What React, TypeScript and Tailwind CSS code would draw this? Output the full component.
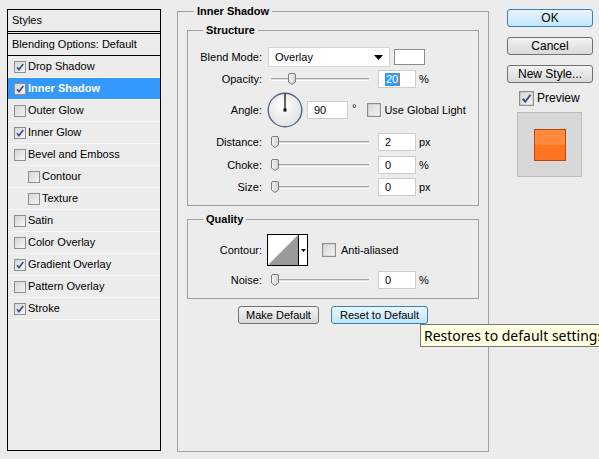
import type { ReactNode } from 'react';

function Check({ checked, size = 12, className = '' }: { checked?: boolean; size?: number; className?: string }) {
  return (
    <svg width={size} height={size} viewBox="0 0 12 12" className={`shrink-0 ${className}`}>
      <defs>
        <linearGradient id="cbg" x1="0" y1="0" x2="1" y2="1">
          <stop offset="0" stopColor="#d4d4d4" />
          <stop offset="1" stopColor="#f7f7f7" />
        </linearGradient>
      </defs>
      <rect x="0.5" y="0.5" width="11" height="11" fill="url(#cbg)" stroke="#8e8f8f" />
      {checked && <path d="M3 6.2 L5 8.6 L9.2 3" fill="none" stroke="#3e4f87" strokeWidth="1.6" />}
    </svg>
  );
}

const layers = [
  { name: 'Drop Shadow', checked: true },
  { name: 'Inner Shadow', checked: true, selected: true },
  { name: 'Outer Glow' },
  { name: 'Inner Glow', checked: true },
  { name: 'Bevel and Emboss' },
  { name: 'Contour', sub: true },
  { name: 'Texture', sub: true },
  { name: 'Satin' },
  { name: 'Color Overlay' },
  { name: 'Gradient Overlay', checked: true },
  { name: 'Pattern Overlay' },
  { name: 'Stroke', checked: true },
];

function Thumb({ className }: { className: string }) {
  return (
    <svg width="8" height="12" viewBox="0 0 8 12" className={`absolute top-[3px] ${className}`}>
      <defs>
        <linearGradient id="thg" x1="0" y1="0" x2="1" y2="0">
          <stop offset="0" stopColor="#f4f4f4" />
          <stop offset="1" stopColor="#d2d2d2" />
        </linearGradient>
      </defs>
      <path d="M2 0.5 H6 Q7.5 0.5 7.5 2 V9 L4 11.5 L0.5 9 V2 Q0.5 0.5 2 0.5 Z" fill="url(#thg)" stroke="#7c7c7c" />
    </svg>
  );
}

function Slider({ thumb }: { thumb: string }) {
  return (
    <div className="relative ml-[9px] w-[98px] h-[18px] flex items-center">
      <div className="w-full h-[3px] border-t border-t-[#a4a4a4] border-b border-b-white bg-[#dedede]" />
      <Thumb className={thumb} />
    </div>
  );
}

function Field({ children, className = '' }: { children: ReactNode; className?: string }) {
  return (
    <div className={`h-[18px] bg-white border border-[#cdcdcd] flex items-center pl-[6px] ${className}`}>{children}</div>
  );
}

function Row({ label, className = '', children }: { label: string; className?: string; children: ReactNode }) {
  return (
    <div className={`flex items-center ${className}`}>
      <div className="w-[74px] text-right">{label}</div>
      {children}
    </div>
  );
}

function Button({ children, primary, className = '' }: { children: ReactNode; primary?: boolean; className?: string }) {
  return (
    <div
      className={`h-[18px] flex items-center justify-center rounded-[3px] border ${
        primary
          ? 'border-[#3c7fb1] bg-gradient-to-b from-[#eaf6fd] to-[#bee6fd]'
          : 'border-[#707070] bg-gradient-to-b from-[#f3f3f3] to-[#d9d9d9]'
      } ${className}`}
    >
      {children}
    </div>
  );
}

export default function App() {
  return (
    <div className="relative w-[599px] h-[459px] overflow-hidden bg-[#ececec] flex items-start pl-[7px] text-[11px] leading-[13px] text-black font-['Liberation_Sans',Arial,sans-serif]">
      {/* styles list */}
      <div className="mt-[9px] w-[154px] h-[442px] border border-black flex flex-col">
        <div className="h-[22px] flex items-center pl-[4px] border-b border-black">Styles</div>
        <div className="h-[2px] border-b border-black" />
        <div className="h-[22px] flex items-center pl-[4px] border-b border-black">Blending Options: Default</div>
        {layers.map((l) => (
          <div
            key={l.name}
            className={`h-[22px] flex items-center border-b border-b-[#f8f8f8] ${l.sub ? 'pl-[20px]' : 'pl-[6px]'} ${
              l.selected ? 'bg-[#3399ff] text-white font-bold' : ''
            }`}
          >
            <Check checked={l.checked} />
            <span className="ml-[2px]">{l.name}</span>
          </div>
        ))}
      </div>

      {/* inner shadow settings */}
      <fieldset className="mt-[4px] ml-[16px] w-[312px] h-[448px] border border-[#a0a0a0] px-[9px] pt-[5px]">
        <legend className="ml-[7px] px-[3px] font-bold leading-[14px]">Inner Shadow</legend>

        <fieldset className="w-full border border-[#a0a0a0] pt-[10px] pb-[9px]">
          <legend className="ml-[15px] px-[3px] font-bold leading-[14px]">Structure</legend>
          <Row label="Blend Mode:">
            <div className="ml-[6px] w-[122px] h-[20px] bg-white border border-[#d6d6d6] flex items-center pl-[6px] pr-[6px] justify-between">
              <span>Overlay</span>
              <svg width="9" height="5" viewBox="0 0 9 5">
                <path d="M0 0 H9 L4.5 5 Z" fill="#000" />
              </svg>
            </div>
            <div className="ml-[4px] w-[31px] h-[16px] bg-white border border-[#8a8a8a]" />
          </Row>
          <Row label="Opacity:" className="mt-[3px] h-[18px]">
            <Slider thumb="left-[17px]" />
            <Field className="ml-[9px] w-[38px] border-[#7eb4ea] pl-[3px]">
              <span className="bg-[#3399ff] text-white px-[1px]">20</span>
              <span className="w-[1px] h-[13px] bg-[#e07000]" />
            </Field>
            <span className="ml-[3px]">%</span>
          </Row>
          <Row label="Angle:" className="mt-[4px] h-[36px]">
            <svg width="36" height="36" viewBox="0 0 36 36" className="ml-[5px]">
              <defs>
                <radialGradient id="dial" cx="0.45" cy="0.4" r="0.6">
                  <stop offset="0" stopColor="#ffffff" />
                  <stop offset="1" stopColor="#e2e2e2" />
                </radialGradient>
              </defs>
              <circle cx="18" cy="18" r="16.8" fill="url(#dial)" stroke="#53658c" strokeWidth="1.4" />
              <line x1="18" y1="18" x2="18" y2="1.5" stroke="#000" strokeWidth="1.2" />
              <rect x="16.5" y="16.5" width="3" height="3" fill="#000" />
            </svg>
            <Field className="ml-[4px] w-[41px] h-[17px]">90</Field>
            <span className="ml-[4px] self-start mt-[10px]">°</span>
            <Check size={14} className="ml-[11px]" />
            <span className="ml-[3px]">Use Global Light</span>
          </Row>
          <Row label="Distance:" className="mt-[5px] h-[18px]">
            <Slider thumb="left-[0px]" />
            <Field className="ml-[9px] w-[38px]">2</Field>
            <span className="ml-[3px]">px</span>
          </Row>
          <Row label="Choke:" className="mt-[5px] h-[18px]">
            <Slider thumb="left-[0px]" />
            <Field className="ml-[9px] w-[38px]">0</Field>
            <span className="ml-[3px]">%</span>
          </Row>
          <Row label="Size:" className="mt-[4px] h-[18px]">
            <Slider thumb="left-[0px]" />
            <Field className="ml-[9px] w-[38px]">0</Field>
            <span className="ml-[3px]">px</span>
          </Row>
        </fieldset>

        <fieldset className="mt-[6px] w-full border border-[#a0a0a0] pt-[8px] pb-[9px]">
          <legend className="ml-[15px] px-[3px] font-bold leading-[14px]">Quality</legend>
          <Row label="Contour:" className="h-[32px]">
            <div className="ml-[5px] w-[41px] h-[32px] border border-black bg-white flex">
              <svg width="30" height="30" viewBox="0 0 30 30" className="shrink-0">
                <path d="M0 30 L30 0 V30 Z" fill="#999" />
              </svg>
              <div className="flex-1 border-l border-black flex items-center justify-center">
                <svg width="5" height="3" viewBox="0 0 5 3">
                  <path d="M0 0 H5 L2.5 3 Z" fill="#000" />
                </svg>
              </div>
            </div>
            <Check size={14} className="ml-[14px]" />
            <span className="ml-[5px]">Anti-aliased</span>
          </Row>
          <Row label="Noise:" className="mt-[5px] h-[18px]">
            <Slider thumb="left-[0px]" />
            <Field className="ml-[9px] w-[38px]">0</Field>
            <span className="ml-[3px]">%</span>
          </Row>
        </fieldset>

        <div className="mt-[7px] flex justify-center gap-[12px]">
          <Button className="w-[81px]">Make Default</Button>
          <Button primary className="w-[97px]">Reset to Default</Button>
        </div>
      </fieldset>

      {/* right column */}
      <div className="ml-[18px] mt-[9px] w-[86px] flex flex-col">
        <Button primary className="text-[12px]">OK</Button>
        <Button className="mt-[10px] text-[12px]">Cancel</Button>
        <Button className="mt-[10px] text-[12px]">New Style...</Button>
        <div className="mt-[8px] ml-[12px] h-[15px] flex items-center">
          <Check checked size={15} />
          <span className="ml-[3px] text-[12px]">Preview</span>
        </div>
        <div className="mt-[6px] ml-[10px] w-[65px] h-[65px] bg-[#d8d8d8] border border-[#bcbcbc] flex items-center justify-center">
          <div className="w-[32px] h-[32px] border border-[#b9470c] bg-gradient-to-b from-[#ff8a3e] from-50% to-[#ff7420] to-50%" />
        </div>
      </div>

      <div className="absolute left-[420px] top-[324px] h-[23px] pl-[3px] pr-[6px] flex items-center whitespace-nowrap border border-[#767676] bg-[#ffffe1] text-[14px] font-['Noto_Sans',sans-serif]">
        Restores to default settings
      </div>
    </div>
  );
}
